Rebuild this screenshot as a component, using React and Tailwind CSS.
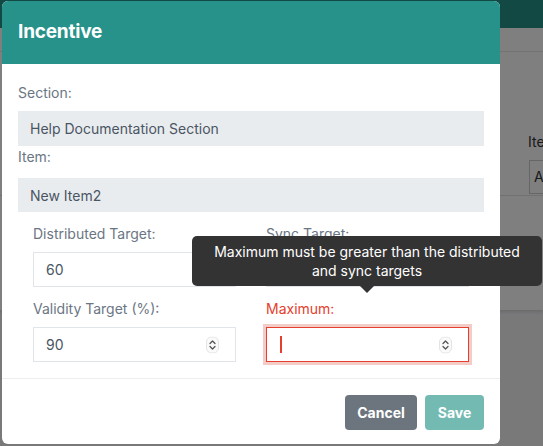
import React from 'react';

const font = { fontFamily: 'Inter, "Liberation Sans", Arial, sans-serif' };

// Small up/down stepper glyph drawn at the right end of number fields
function Stepper() {
  return (
    <svg width="13" height="17" viewBox="0 0 13 17" className="absolute right-[16px] top-1/2 -translate-y-1/2">
      <rect x="0.5" y="0.5" width="12" height="16" rx="5" fill="#fafafa" stroke="#e3e3e3" />
      <path d="M4 7 L6.5 4.5 L9 7" fill="none" stroke="#555" strokeWidth="1.3" strokeLinecap="round" strokeLinejoin="round" />
      <path d="M4 10 L6.5 12.5 L9 10" fill="none" stroke="#555" strokeWidth="1.3" strokeLinecap="round" strokeLinejoin="round" />
    </svg>
  );
}

function Field({ label, value, stepper, error }) {
  return (
    <div className="flex flex-col">
      <label className={`h-[21px] leading-[21px] text-[14px] ${error ? 'text-[#e5402d]' : 'text-[#6b7683]'}`}>{label}</label>
      <div
        className={`relative mt-[8px] h-[35px] bg-white ${
          error ? 'border border-[#e5402d] ring-[3px] ring-[#f3cbc7]' : 'border border-[#e1e4e8]'
        }`}
      >
        <div className="flex h-full items-center pl-[12px] text-[14px] text-[#4a5563]">
          {error ? <span className="block h-[17px] w-[2px] bg-[#e5402d] ml-[1px]" /> : value}
        </div>
        {stepper && <Stepper />}
      </div>
    </div>
  );
}

export default function App() {
  return (
    <div className="relative h-[446px] w-[543px] overflow-hidden bg-[#f2f2f5]" style={font}>
      {/* page underneath the dialog */}
      <div className="h-[28px] bg-[#26928a]" />
      <div className="h-[282px] bg-white shadow-[0_2px_3px_rgba(0,0,0,0.12)]">
        <div className="h-[24px] border-b border-[#e6e6e6]" />
        <div className="flex flex-col items-end pt-[79px]">
          <div className="w-[15px] text-[14px] text-[#333] overflow-hidden whitespace-nowrap">Item</div>
          <div className="mt-[8px] h-[34px] w-[14px] border-l border-y border-[#ccc] pl-[4px] text-[14px] leading-[32px] text-[#333] overflow-hidden">
            A
          </div>
          <div className="mt-[1px] h-px w-full bg-[#e2e2e2]" />
        </div>
      </div>

      {/* backdrop */}
      <div className="absolute inset-0 bg-black/50" />

      {/* dialog */}
      <div className="absolute left-[2px] top-[1px] w-[498px] rounded-[6px] bg-white">
        <div className="flex h-[63px] items-center rounded-t-[6px] bg-[#26928a] px-[16px]">
          <h1 className="text-[19px] font-bold text-white tracking-[-0.2px]">Incentive</h1>
        </div>

        <div className="px-[16px] pt-[18px] pb-[16px]">
          <label className="block h-[21px] leading-[21px] text-[14px] text-[#6b7683]">Section:</label>
          <div className="mt-[8px] flex h-[35px] items-center bg-[#e9ecef] px-[12px] text-[14px] text-[#4a5563]">
            Help Documentation Section
          </div>
          <label className="block h-[21px] leading-[21px] text-[14px] text-[#6b7683]">Item:</label>
          <div className="mt-[11px] flex h-[34px] items-center bg-[#e9ecef] px-[12px] text-[14px] text-[#4a5563]">
            New Item2
          </div>

          <div className="mt-[11px] grid grid-cols-2 gap-x-[30px] gap-y-[11px] px-[15px]">
            <Field label="Distributed Target:" value="60" />
            <Field label="Sync Target:" value="" />
            <Field label="Validity Target (%):" value="90" stepper />
            <Field label="Maximum:" error stepper />
          </div>
        </div>

        <div className="flex justify-end gap-[8px] border-t border-[#eeeeee] px-[16px] pt-[16px] pb-[14px]">
          <button className="h-[35px] w-[72px] rounded-[4px] bg-[#6c757d] text-[14px] font-bold text-white">Cancel</button>
          <button className="h-[35px] w-[59px] rounded-[4px] bg-[#73bab2] text-[14px] font-bold text-white">Save</button>
        </div>
      </div>

      {/* validation tooltip over the Maximum field */}
      <div className="absolute left-[192px] top-[236px] w-[350px]">
        <div className="rounded-[5px] bg-[#333333] px-[10px] py-[6px] text-center text-[14px] leading-[19px] text-white">
          Maximum must be greater than the distributed and sync targets
        </div>
        <div className="absolute left-[168px] top-full h-0 w-0 border-x-[7px] border-t-[7px] border-x-transparent border-t-[#333333]" />
      </div>
    </div>
  );
}
